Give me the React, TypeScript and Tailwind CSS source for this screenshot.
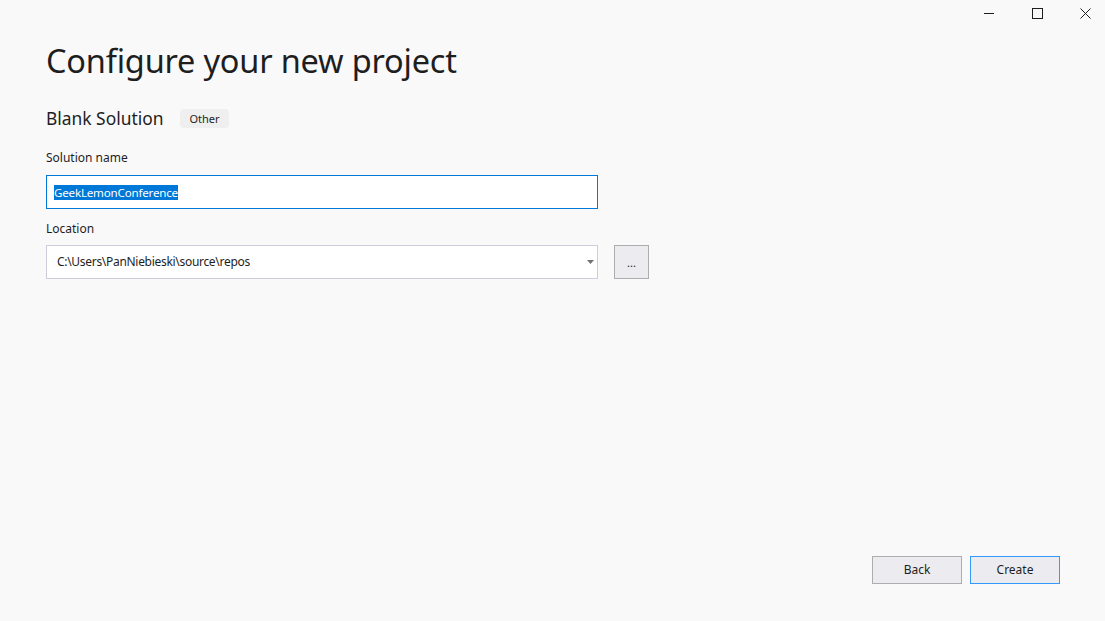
export default function App() {
  return (
    <div
      className="flex h-[621px] w-full flex-col overflow-hidden bg-[#f9f9fa] text-[#1e1e1e]"
      style={{ fontFamily: '"Noto Sans", "Open Sans", sans-serif' }}
    >
      {/* Title bar controls */}
      <div className="mr-[-4px] flex h-[26px] justify-end">
        <button className="flex w-[48px] items-center justify-center">
          <svg width="10" height="10" viewBox="0 0 10 10">
            <path d="M0 5.5h10" stroke="#1e1e1e" strokeWidth="1" />
          </svg>
        </button>
        <button className="flex w-[48px] items-center justify-center">
          <svg width="11" height="11" viewBox="0 0 11 11">
            <rect x="0.5" y="0.5" width="10" height="10" fill="none" stroke="#1e1e1e" strokeWidth="1" />
          </svg>
        </button>
        <button className="flex w-[48px] items-center justify-center">
          <svg width="11" height="11" viewBox="0 0 11 11">
            <path d="M0.5 0.5l10 10M10.5 0.5l-10 10" stroke="#1e1e1e" strokeWidth="1" />
          </svg>
        </button>
      </div>

      <div className="flex flex-1 flex-col px-[46px]">
        <h1 className="mt-[15px] text-[32.5px] leading-[40px] font-normal tracking-[-0.2px]">
          Configure your new project
        </h1>

        <div className="mt-[25px] flex items-center gap-[17px]">
          <h2 className="text-[17.4px] leading-[24px]">Blank Solution</h2>
          <span className="rounded-[4px] bg-[#efeff0] px-[9px] py-[2px] text-[11px] leading-[15px]">
            Other
          </span>
        </div>

        <label className="mt-[20px] text-[12px] leading-[16px]">Solution name</label>
        <div className="mt-[9px] flex h-[34px] w-[552px] items-center border border-[#0078d7] bg-white px-[7px]">
          <span className="bg-[#0078d7] text-[11.6px] leading-[15px] tracking-[-0.2px] text-white">
            GeekLemonConference
          </span>
        </div>

        <label className="mt-[12px] text-[12px] leading-[16px]">Location</label>
        <div className="mt-[8px] flex items-center gap-[16px]">
          <div className="flex h-[34px] w-[552px] items-center justify-between border border-[#cccedb] bg-white pl-[10px] pr-[3px]">
            <span className="text-[12px] tracking-[-0.3px]">C:\Users\PanNiebieski\source\repos</span>
            <svg width="7" height="4" viewBox="0 0 7 4">
              <path d="M0 0h7L3.5 4z" fill="#717171" />
            </svg>
          </div>
          <button className="flex h-[34px] w-[35px] items-end justify-center border border-[#adadad] bg-[#ececf0] pb-[9px] text-[11px] leading-[12px]">
            ...
          </button>
        </div>

        <div className="mt-auto mr-[-1px] mb-[37px] flex justify-end gap-[8px]">
          <button className="h-[28px] w-[90px] border border-[#adadad] bg-[#ececf0] text-[12px]">
            Back
          </button>
          <button className="h-[28px] w-[90px] border border-[#3399ff] bg-[#ececf0] text-[12px]">
            Create
          </button>
        </div>
      </div>
    </div>
  );
}
